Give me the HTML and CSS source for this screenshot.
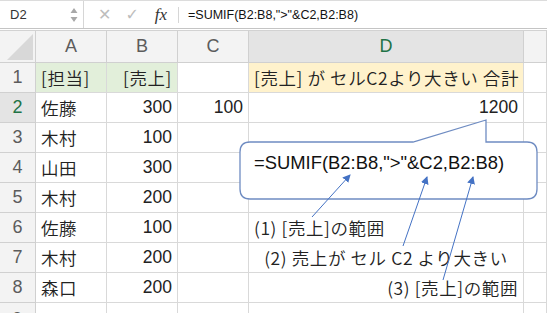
FILE: index.html
```html
<!DOCTYPE html>
<html lang="ja">
<head>
    <meta charset="UTF-8">
    <title>SUMIF</title>
    <link rel="stylesheet" href="styles.css">
</head>
<body>
<div class="fbar">
    <div class="namebox">
        <span>D2</span>
        <svg class="spin" width="8" height="16" viewBox="0 0 8 16"><path d="M4 1 L7.5 6 L0.5 6 Z M4 15 L7.5 10 L0.5 10 Z" fill="#a8a8a8"/></svg>
    </div>
    <div class="tools">
        <span class="cancel">✕</span>
        <span class="ok">✓</span>
        <span class="fx">fx</span>
    </div>
    <div class="formula">=SUMIF(B2:B8,"&gt;"&amp;C2,B2:B8)</div>
</div>

<div class="sheet">
    <div class="hd corner"><div class="tri"></div></div>
    <div class="hd col">A</div>
    <div class="hd col">B</div>
    <div class="hd col">C</div>
    <div class="hd col sel">D</div>
    <div class="hd col"></div>

    <div class="hd row">1</div>
    <div class="cell jp green">[担当]</div>
    <div class="cell jp green num">[売上]</div>
    <div class="cell"></div>
    <div class="cell jp yellow">[売上] が セルC2より大きい 合計</div>
    <div class="cell"></div>

    <div class="hd row sel">2</div>
    <div class="cell jp">佐藤</div>
    <div class="cell num">300</div>
    <div class="cell num">100</div>
    <div class="cell num">1200</div>
    <div class="cell"></div>

    <div class="hd row">3</div>
    <div class="cell jp">木村</div>
    <div class="cell num">100</div>
    <div class="cell"></div>
    <div class="cell"></div>
    <div class="cell"></div>

    <div class="hd row">4</div>
    <div class="cell jp">山田</div>
    <div class="cell num">300</div>
    <div class="cell"></div>
    <div class="cell"></div>
    <div class="cell"></div>

    <div class="hd row">5</div>
    <div class="cell jp">木村</div>
    <div class="cell num">200</div>
    <div class="cell"></div>
    <div class="cell"></div>
    <div class="cell"></div>

    <div class="hd row">6</div>
    <div class="cell jp">佐藤</div>
    <div class="cell num">100</div>
    <div class="cell"></div>
    <div class="cell jp">(1) [売上]の範囲</div>
    <div class="cell"></div>

    <div class="hd row">7</div>
    <div class="cell jp">木村</div>
    <div class="cell num">200</div>
    <div class="cell"></div>
    <div class="cell jp mid">(2) 売上が セル C2 より大きい</div>
    <div class="cell"></div>

    <div class="hd row">8</div>
    <div class="cell jp">森口</div>
    <div class="cell num">200</div>
    <div class="cell"></div>
    <div class="cell jp num">(3) [売上]の範囲</div>
    <div class="cell"></div>

    <div class="hd row last">9</div>
    <div class="cell"></div>
    <div class="cell"></div>
    <div class="cell"></div>
    <div class="cell"></div>
    <div class="cell"></div>
</div>

<!-- callout and arrows drawn over the sheet -->
<svg class="overlay" width="547" height="313" viewBox="0 0 547 313">
    <defs>
        <marker id="head" markerWidth="8" markerHeight="8" refX="7" refY="4" orient="auto" markerUnits="userSpaceOnUse">
            <path d="M0 0 L8 4 L0 8 Z" fill="#4472c4"/>
        </marker>
    </defs>
    <path d="M250 142 L413 142 L486 120 L486 142 L527 142 Q537 142 537 152 L537 189 Q537 199 527 199 L250 199 Q240 199 240 189 L240 152 Q240 142 250 142 Z"
          fill="#fff" stroke="#6f8cc2" stroke-width="1.3"/>
    <line x1="312" y1="217" x2="350" y2="175" stroke="#4472c4" stroke-width="1" marker-end="url(#head)"/>
    <line x1="403" y1="246" x2="427" y2="177" stroke="#4472c4" stroke-width="1" marker-end="url(#head)"/>
    <line x1="443" y1="280" x2="473" y2="177" stroke="#4472c4" stroke-width="1" marker-end="url(#head)"/>
</svg>
<div class="callout-text">=SUMIF(B2:B8,"&gt;"&amp;C2,B2:B8)</div>
</body>
</html>
```

FILE: styles.css
```css
body {
    margin: 0;
    width: 547px;
    height: 313px;
    overflow: hidden;
    background: #fff;
    position: relative;
    font-family: "Liberation Sans", "Noto Sans CJK JP", sans-serif;
    color: #222;
}

.fbar {
    display: flex;
    align-items: center;
    height: 27px;
    border-top: 1px solid #dcdcdc;
    border-bottom: 1px solid #c4c4c4;
    margin-bottom: 1px;
}
.namebox {
    width: 84px;
    height: 100%;
    border-right: 1px solid #d6d6d6;
    display: flex;
    align-items: center;
    justify-content: space-between;
    padding: 0 5px 0 10px;
    box-sizing: border-box;
    font-size: 13px;
    color: #333;
}
.tools {
    width: 95px;
    display: flex;
    align-items: center;
    border-right: 1px solid #d6d6d6;
    box-sizing: border-box;
    height: 16px;
    padding-left: 14px;
    gap: 14px;
}
.cancel, .ok {
    color: #bdbdbd;
    font-size: 16px;
    font-family: "DejaVu Sans", sans-serif;
}
.fx {
    font-family: "Liberation Serif", serif;
    font-style: italic;
    font-size: 17px;
    color: #333;
    margin-left: 2px;
}
.formula {
    padding-left: 9px;
    font-size: 12.5px;
    color: #111;
}

.sheet {
    display: grid;
    grid-template-columns: 36px 71px 71px 71px 275px 1fr;
    grid-template-rows: 32px repeat(9, 30px);
    border-top: 1px solid #d2d2d2;
}
.hd {
    background: #f3f3f3;
    color: #5c5c5c;
    font-size: 18px;
    display: flex;
    align-items: center;
    justify-content: center;
    border-right: 1px solid #d0d0d0;
    border-bottom: 1px solid #d0d0d0;
    box-sizing: border-box;
}
.hd.sel {
    background: #e4e4e4;
    color: #217346;
}
.hd.last {
    align-items: flex-start;
    padding-top: 6px;
}
.corner {
    position: relative;
}
.tri {
    position: absolute;
    right: 2px;
    bottom: 2px;
    width: 26px;
    height: 26px;
    background: #d8d8d8;
    clip-path: polygon(100% 0, 100% 100%, 0 100%);
}
.cell {
    font-size: 17.5px;
    display: flex;
    align-items: center;
    padding: 0 5px;
    white-space: nowrap;
    border-right: 1px solid #d9d9d9;
    border-bottom: 1px solid #d9d9d9;
    box-sizing: border-box;
}
.jp {
    font-family: "Noto Sans CJK JP", sans-serif;
    font-weight: 350;
    font-size: 17.5px;
    letter-spacing: 0.6px;
}
.num {
    justify-content: flex-end;
}
.mid {
    justify-content: center;
}
.green {
    background: #e2efda;
}
.yellow {
    background: #fff2cc;
}

.overlay {
    position: absolute;
    left: 0;
    top: 0;
    pointer-events: none;
}
.callout-text {
    position: absolute;
    left: 254px;
    top: 152px;
    font-size: 18.4px;
    color: #111;
    white-space: nowrap;
}
```
